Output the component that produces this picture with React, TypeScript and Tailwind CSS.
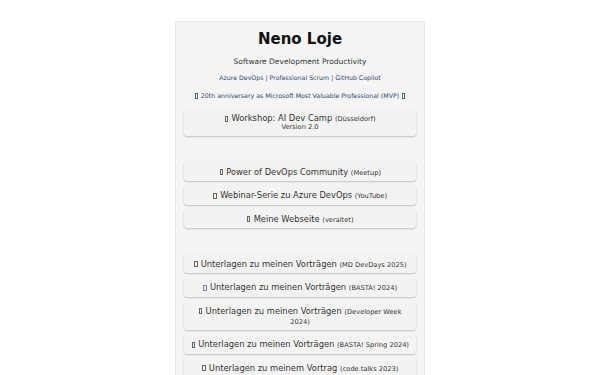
type LinkItem = {
  label: string;
  note?: string;
  breakNote?: boolean;
  iconClass?: string;
};

const community: LinkItem[] = [
  { label: "Power of DevOps Community", note: "(Meetup)" },
  { label: "Webinar-Serie zu Azure DevOps", note: "(YouTube)" },
  { label: "Meine Webseite", note: "(veraltet)" },
];

const talks: LinkItem[] = [
  { label: "Unterlagen zu meinen Vorträgen", note: "(MD DevDays 2025)" },
  { label: "Unterlagen zu meinen Vorträgen", note: "(BASTA! 2024)", iconClass: "border-[#6a86ab]" },
  { label: "Unterlagen zu meinen Vorträgen", note: "(Developer Week", breakNote: true },
  { label: "Unterlagen zu meinen Vorträgen", note: "(BASTA! Spring 2024)" },
  { label: "Unterlagen zu meinem Vortrag", note: "(code.talks 2023)" },
];

// missing-glyph box, as the emoji shows up without an emoji font
const Tofu = ({ className = "border-[#666]" }: { className?: string }) => (
  <span
    className={`mx-[0.5px] inline-block h-[6px] w-[3.5px] border-[0.8px] align-[-0.5px] ${className}`}
  />
);

const LinkButton = ({ item }: { item: LinkItem }) => (
  <a
    href="#"
    className="block w-full rounded-[3px] bg-[#f3f3f3] px-[4px] py-[4.5px] text-center text-[8.33px] leading-[10px] text-[#333] shadow-[0_1px_2px_rgba(0,0,0,0.22)]"
  >
    <Tofu className={item.iconClass} /> {item.label}{" "}
    <span className="text-[6.67px] leading-none">{item.note}</span>
    {item.breakNote && (
      <>
        <br />
        <span className="text-[6.67px] leading-none">2024)</span>
      </>
    )}
  </a>
);

export default function App() {
  return (
    <div className="min-h-screen bg-white pt-[21px] font-['DejaVu_Sans',sans-serif]">
      <div className="mx-auto w-[250px] border border-[#e4e4e4] bg-[#f5f5f5] px-2 pt-2 pb-6 text-center">
        <h1 className="text-[15px] font-bold leading-[18px] text-[#111]">Neno Loje</h1>
        <p className="mt-[8.5px] text-[7.5px] leading-[9px] text-[#333]">
          Software Development Productivity
        </p>
        <p className="mt-[8.5px] text-[6.25px] leading-[8px] text-[#2c4a6e]">
          Azure DevOps | Professional Scrum | GitHub Copilot
        </p>
        <p className="mt-[10px] text-[6.25px] leading-[8px] text-[#2c4a6e]">
          <Tofu className="border-[#4a6585]" /> 20th anniversary as Microsoft Most Valuable
          Professional (MVP) <Tofu className="border-[#4a6585]" />
        </p>

        <a
          href="#"
          className="mt-[8.5px] block w-full rounded-[3px] bg-[#f3f3f3] px-[4px] py-[4.5px] text-center text-[#333] shadow-[0_1px_2px_rgba(0,0,0,0.22)]"
        >
          <span className="block text-[8.33px] leading-[10px]">
            <Tofu /> Workshop: AI Dev Camp{" "}
            <span className="text-[6.67px] leading-none">(Düsseldorf)</span>
          </span>
          <span className="block text-[6.67px] leading-[8px]">Version 2.0</span>
        </a>

        <div className="mt-[26.5px] flex flex-col gap-[4.5px]">
          {community.map((item) => (
            <LinkButton key={item.label} item={item} />
          ))}
        </div>

        <div className="mt-[26px] flex flex-col gap-[4.5px]">
          {talks.map((item, i) => (
            <LinkButton key={i} item={item} />
          ))}
        </div>
      </div>
    </div>
  );
}
